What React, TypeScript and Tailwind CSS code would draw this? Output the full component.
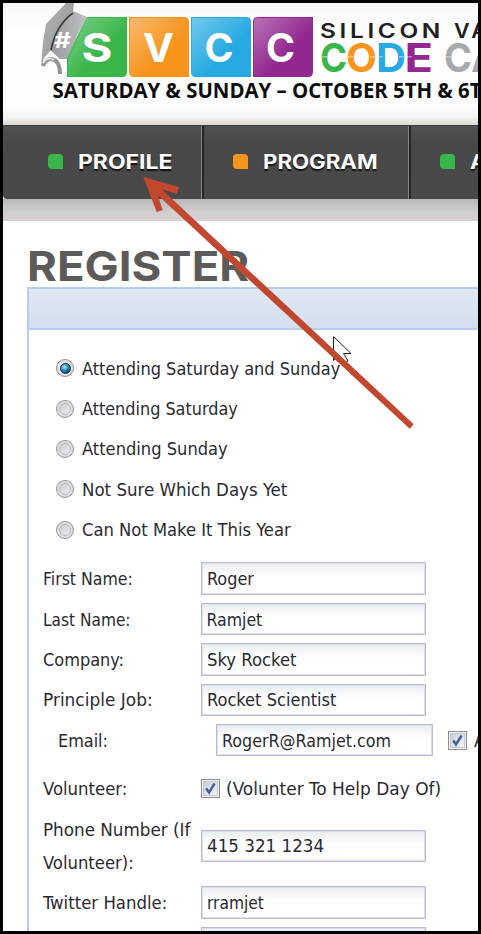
import { useLayoutEffect, useRef, useState } from "react";

/** Single line of text scaled horizontally so that it fills the given width. */
function Fit({ text, width, className = "" }: { text: string; width: number; className?: string }) {
  const ref = useRef<HTMLSpanElement>(null);
  const [scale, setScale] = useState(1);
  useLayoutEffect(() => {
    if (ref.current) setScale(width / ref.current.offsetWidth);
  }, [width, text]);
  return (
    <span className="block shrink-0" style={{ width }}>
      <span
        ref={ref}
        className={`inline-block origin-left whitespace-nowrap align-top ${className}`}
        style={{ transform: `scaleX(${scale})` }}
      >
        {text}
      </span>
    </span>
  );
}

const body = "font-['DejaVu_Sans_Condensed','DejaVu_Sans',sans-serif] text-[17.5px] leading-[31px] pt-[2px] text-[#2a2a30]";

function Logo() {
  const wide = { fontFamily: "Inter, sans-serif", lengthAdjust: "spacingAndGlyphs" as const };
  return (
    <svg width="475" height="122" viewBox="3 3 475 122" className="block">
      <defs>
        <linearGradient id="board" x1="0" y1="0" x2="1" y2="1">
          <stop offset="0" stopColor="#b4b5b7" />
          <stop offset="1" stopColor="#8e9093" />
        </linearGradient>
        <linearGradient id="crown" x1="0" y1="0" x2="1" y2="0">
          <stop offset="0" stopColor="#96989b" />
          <stop offset="1" stopColor="#c0c1c3" />
        </linearGradient>
        <linearGradient id="shine" x1="0" y1="0" x2="0.6" y2="0.6">
          <stop offset="0" stopColor="#fff" stopOpacity="0.35" />
          <stop offset="1" stopColor="#fff" stopOpacity="0" />
        </linearGradient>
      </defs>
      <path d="M66 3h8l-1 9-16 17-6 21-7 8-3 9 2-25 3-18Z" fill="url(#board)" />
      <path d="M73 11 87 17 77 36 68 59 60 59 50 50 54 33 63 20Z" fill="url(#crown)" />
      <path d="M73 13Q56 25 51 50" fill="none" stroke="#3b3c3e" strokeWidth="1.6" />
      <path d="M43 66q3-7 8-7 9 1 9 15" fill="none" stroke="#939598" strokeWidth="4" />
      <path d="M43 63q5-7 11-3" fill="none" stroke="#f4f4f4" strokeWidth="1.4" />
      <text x="54" y="48" fontSize="21" fontWeight="700" fill="#fff" textLength="17" {...wide}>#</text>
      <g>
        <path d="M87 17H127V72Q127 77 122 77H67V59L76 39Z" fill="#3ab54a" />
        <path d="M129 17H184Q189 17 189 22V77H134Q129 77 129 72Z" fill="#f7941e" />
        <path d="M191 17H246Q251 17 251 22V77H196Q191 77 191 72Z" fill="#27aae1" />
        <path d="M258 17H313V72Q313 77 308 77H253V22Q253 17 258 17Z" fill="#92278f" />
        <path d="M87 18H126V77H68V59Z" fill="url(#shine)" />
        <path d="M130 18H184Q188 18 188 22V76H130Z" fill="url(#shine)" />
        <path d="M192 18H246Q250 18 250 22V76H192Z" fill="url(#shine)" />
        <path d="M258 18H312V76H254V22Q254 18 258 18Z" fill="url(#shine)" />
      </g>
      <g fontSize="39.5" fontWeight="700" fill="#fff">
        <text x="81.500" y="62" textLength="31" {...wide}>S</text>
        <text x="143" y="62" textLength="31" {...wide}>V</text>
        <text x="204.500" y="62" textLength="29" {...wide}>C</text>
        <text x="266" y="62" textLength="29" {...wide}>C</text>
      </g>
      <g fontSize="20" fontWeight="600" fill="#202020">
        <text x="320" y="38" textLength="124" letterSpacing="3" {...wide}>SILICON</text>
        <text x="454" y="38" textLength="36" letterSpacing="3" {...wide}>VA</text>
      </g>
      <g fontSize="39.5" fontWeight="700">
        <text x="320" y="72" textLength="27" fill="#3ab54a" {...wide}>C</text>
        <text x="346" y="72" textLength="31" fill="#f7941e" {...wide}>O</text>
        <text x="376" y="72" textLength="30" fill="#27aae1" {...wide}>D</text>
        <text x="404.500" y="72" textLength="28.500" fill="#92278f" {...wide}>E</text>
        <text x="444" y="72" textLength="28" fill="#a7a9ac" {...wide}>C</text>
        <text x="471" y="72" textLength="30" fill="#a7a9ac" {...wide}>A</text>
      </g>
      <g fill="#fff" opacity="0.4">
        <path d="M322 56h5v1.500h-5zM348 56h5v1.500h-5zM370 56h5v1.500h-5zM379 56h4v1.500h-4zM399 56h5v1.500h-5zM407 56h5v1.500h-5zM446 56h5v1.500h-5z" />
      </g>
      <text x="52.500" y="98" fontFamily="'Open Sans', sans-serif" fontSize="21" fontWeight="700" fill="#0c0c0c" textLength="429" lengthAdjust="spacingAndGlyphs">
        SATURDAY &amp; SUNDAY – OCTOBER 5TH &amp; 6T
      </text>
    </svg>
  );
}

function NavItem({ label, width, textWidth, cell, orange = false }: { label: string; width: number; textWidth: number; cell: string; orange?: boolean }) {
  return (
    <div className={`flex h-full shrink-0 items-center ${cell}`} style={{ width }}>
      <span className={`h-[15px] w-[15px] shrink-0 rounded-[4px] rounded-br-none ${orange ? "bg-[#f7941e]" : "bg-[#3ab54a]"}`} />
      <span className="w-[15px] shrink-0" />
      <Fit
        text={label}
        width={textWidth}
        className="font-[Inter,sans-serif] text-[19.5px] font-bold leading-[24px] text-white [text-shadow:0_2px_1px_#111]"
      />
    </div>
  );
}

function Radio({ text, width, checked = false }: { text: string; width: number; checked?: boolean }) {
  return (
    <label className="flex h-[40.4px] items-center">
      <span className="mr-[8px] flex h-[18px] w-[18px] items-center justify-center rounded-full border border-[#929292] bg-[#e0e0e0]">
        {checked ? (
          <span className="h-[11px] w-[11px] rounded-full border border-[#17344e] bg-[radial-gradient(circle_at_40%_35%,#a8e6fa_5%,#2583b5_45%,#0c3352_85%)]" />
        ) : (
          <span className="h-[12px] w-[12px] rounded-full border border-[#b4b8bc] bg-[linear-gradient(135deg,#c4c8cd,#f1f2f4)]" />
        )}
      </span>
      <Fit text={text} width={width} className={body} />
    </label>
  );
}

function Check() {
  return (
    <span className="flex h-[19px] w-[19px] shrink-0 items-center justify-center border border-[#8a8c90] bg-[#f4f4f4]">
      <span className="flex h-[15px] w-[15px] items-center justify-center border border-[#c3c7cd] bg-[linear-gradient(135deg,#ccd1d8,#f3f4f6)]">
        <svg width="13" height="13" viewBox="0 0 13 13">
          <path d="M2.200 6.500 5 10.500 10.600 1.500" fill="none" stroke="#425f9f" strokeWidth="2.400" />
        </svg>
      </span>
    </span>
  );
}

function Box({ text, width, wide = true }: { text: string; width: number; wide?: boolean }) {
  return (
    <div
      className={`flex h-[32.5px] shrink-0 items-center border border-[#b9bccf] bg-[linear-gradient(#e9edf0,#ffffff_45%)] pl-[4.5px] shadow-[inset_0_0_0_1px_#dcdee8] ${wide ? "w-[225px]" : "w-[217px]"}`}
    >
      {text && <Fit text={text} width={width} className={body} />}
    </div>
  );
}

function Field({ label, labelWidth, value, valueWidth }: { label: string; labelWidth: number; value: string; valueWidth: number }) {
  return (
    <div className="flex h-[40.4px] items-center">
      <div className="w-[158px] shrink-0">
        {label && <Fit text={label} width={labelWidth} className={body} />}
      </div>
      <Box text={value} width={valueWidth} />
    </div>
  );
}

export default function App() {
  return (
    <div className="relative h-[934px] w-[481px] overflow-hidden border-[3px] border-black bg-white">
      <header className="h-[122px] bg-[linear-gradient(#f8f8f8,#ffffff_25%,#fdfdfd_85%,#f3f2f0_94%,#dcd8d3)]">
        <Logo />
      </header>
      <nav className="flex h-[74px] overflow-hidden rounded-bl-[4px] border-t border-[#3c3c3c] bg-[linear-gradient(#525151,#494848_25%,#4a4949)]">
        <NavItem label="PROFILE" width={199} textWidth={94} cell="border-r border-[#858585] pl-[44.5px] pb-[2px]" />
        <NavItem label="PROGRAM" width={207} textWidth={115} orange cell="border-r border-l-2 border-r-[#858585] border-l-[#252525] pl-[29px] pb-[2px]" />
        <NavItem label="ABOUT" width={120} textWidth={80} cell="border-l-2 border-[#252525] pl-[29px] pb-[2px]" />
      </nav>
      <div className="h-[22px] bg-[linear-gradient(#b9b7b9,#d2ced0_60%,#d6d2d4)]" />

      <main className="pl-[24px]">
        <h1 className="h-[66px] pt-[21px]">
          <Fit text="REGISTER" width={222} className="font-[Inter,sans-serif] text-[41px] font-bold leading-[48px] text-[#5c5b5a]" />
        </h1>
        <section className="h-[660px] border-l-2 border-t-2 border-[#b6cdf0]">
          <div className="h-[41px] border-b-2 border-[#b6cdf0] bg-[linear-gradient(#e0e9f5,#d3dfee)]" />
          <div className="pl-[27px] pt-[18px]">
            <Radio text="Attending Saturday and Sunday" width={258} checked />
            <Radio text="Attending Saturday" width={156} />
            <Radio text="Attending Sunday" width={146} />
            <Radio text="Not Sure Which Days Yet" width={205} />
            <Radio text="Can Not Make It This Year" width={209} />
          </div>
          <div className="pl-[14px] pt-[8.500px]">
            <Field label="First Name:" labelWidth={90} value="Roger" valueWidth={47} />
            <Field label="Last Name:" labelWidth={88} value="Ramjet" valueWidth={56} />
            <Field label="Company:" labelWidth={81} value="Sky Rocket" valueWidth={90} />
            <Field label="Principle Job:" labelWidth={110} value="Rocket Scientist" valueWidth={129} />
            <div className="flex h-[40.4px] items-center pl-[15px]">
              <div className="w-[158px] shrink-0">
                <Fit text="Email:" width={50} className={body} />
              </div>
              <Box text="RogerR@Ramjet.com" width={169} wide={false} />
              <span className="w-[15px] shrink-0" />
              <Check />
              <span className="w-[7px] shrink-0" />
              <Fit text="Allow" width={43} className={body} />
            </div>
            <div className="flex h-[57px] items-center">
              <div className="w-[158px] shrink-0">
                <Fit text="Volunteer:" width={84} className={body} />
              </div>
              <Check />
              <span className="w-[6px] shrink-0" />
              <Fit text="(Volunter To Help Day Of)" width={215} className={body} />
            </div>
            <div className="flex h-[65px] items-center pb-[8px]">
              <div className="w-[158px] shrink-0">
                <Fit text="Phone Number (If" width={147} className={body} />
                <Fit text="Volunteer):" width={91} className={body} />
              </div>
              <Box text="415 321 1234" width={117} />
            </div>
            <Field label="Twitter Handle:" labelWidth={124} value="rramjet" valueWidth={57} />
            <Field label="" labelWidth={1} value="" valueWidth={1} />
          </div>
        </section>
      </main>

      {/* Pointer and annotation arrow float over the page */}
      <svg className="absolute left-0 top-0" width="475" height="928" viewBox="3 3 475 928">
        <path d="M333.500 336.500V360.500L339 355.500 344 364 348 361 343.500 353.500H351Z" fill="#fff" stroke="#222" strokeWidth="1" />
        <path d="M143.300 176.700 179.300 187.300 176.700 194 161.700 189.300 413.700 424.300 409.700 428.700 157.700 195 162.700 210 156.700 212Z" fill="#c1472f" />
      </svg>
    </div>
  );
}
